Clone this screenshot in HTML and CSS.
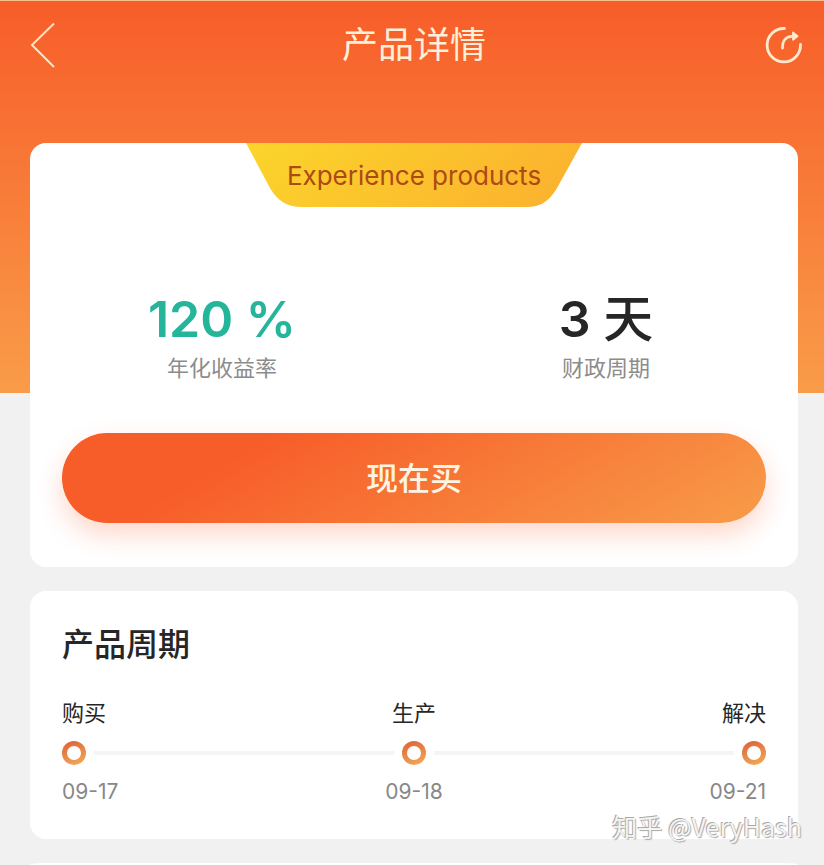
FILE: index.html
```html
<!DOCTYPE html>
<html lang="zh-CN">
<head>
    <meta charset="UTF-8">
    <meta name="viewport" content="width=device-width, initial-scale=1.0">
    <title>产品详情</title>
    <link rel="stylesheet" href="styles.css">
</head>
<body>
    <header class="header">
        <a class="back" href="#" aria-label="返回">
            <svg width="30" height="50" viewBox="0 0 30 50" fill="none" stroke="#ffe3c2" stroke-width="2">
                <path d="M28 3.500L6 25L28 47"/>
            </svg>
        </a>
        <h1>产品详情</h1>
        <button class="share" type="button" aria-label="分享">
            <svg width="40" height="40" viewBox="0 0 40 40" fill="none" stroke="#ffe9cd" stroke-width="2.800" stroke-linecap="round">
                <path d="M22.500 3.500A16.700 16.700 0 1 0 38.500 19.500"/>
                <path d="M20.500 23C20.500 15.500 23 11.800 30 11.300"/>
                <path d="M31 7.500L35.500 11.300L31 14.800Z" fill="#ffe9cd" stroke-width="1.800" stroke-linejoin="round"/>
            </svg>
        </button>
    </header>

    <main>
        <section class="card product">
            <div class="ribbon">
                <svg viewBox="0 0 336 64" width="336" height="64">
                    <defs>
                        <linearGradient id="gold" x1="0" y1="0" x2="1" y2="0.2">
                            <stop offset="0" stop-color="#fbd52b"/>
                            <stop offset="1" stop-color="#fbb42e"/>
                        </linearGradient>
                    </defs>
                    <path fill="url(#gold)" d="M0 0H336L311 45C304 57 296 64 280 64H56C40 64 31 57 24 45Z"/>
                </svg>
                <span>Experience products</span>
            </div>

            <dl class="stats">
                <div>
                    <dd class="rate">120 %</dd>
                    <dt>年化收益率</dt>
                </div>
                <div>
                    <dd>3 <span class="unit">天</span></dd>
                    <dt>财政周期</dt>
                </div>
            </dl>

            <button class="buy" type="button">现在买</button>
        </section>

        <section class="card cycle">
            <h2>产品周期</h2>
            <ol class="timeline">
                <li>
                    <span class="step">购买</span>
                    <i class="dot"></i>
                    <time>09-17</time>
                </li>
                <li>
                    <span class="step">生产</span>
                    <i class="dot"></i>
                    <time>09-18</time>
                </li>
                <li>
                    <span class="step">解决</span>
                    <i class="dot"></i>
                    <time>09-21</time>
                </li>
            </ol>
        </section>

        <section class="card next"></section>
    </main>

    <div class="watermark">知乎 @VeryHash</div>
</body>
</html>
```

FILE: styles.css
```css
* {
    box-sizing: border-box;
    margin: 0;
    padding: 0;
}

html {
    background: #f1f1f1;
}

body {
    position: relative;
    display: flex;
    flex-direction: column;
    min-height: 100vh;
    border-top: 1px solid #f9bd92;
    background: linear-gradient(#f75d29, #f99c49) no-repeat top / 100% 392px;
    font-family: Inter, "Noto Sans CJK SC", sans-serif;
    color: #262626;
}

/* Top bar */
.header {
    display: grid;
    grid-template-columns: 1fr auto 1fr;
    align-items: center;
    height: 88px;
    padding: 0 22px 0 26px;
}

.header h1 {
    font-size: 36px;
    font-weight: 400;
    line-height: 48px;
    color: #ffefd9;
}

.header svg {
    display: block;
}

.share {
    justify-self: end;
    border: none;
    background: none;
    cursor: pointer;
}

/* Cards */
main {
    display: flex;
    flex: 1;
    flex-direction: column;
    gap: 24px;
    padding: 54px 26px 0 30px;
}

.card {
    border-radius: 16px;
    background: #fff;
}

.product {
    padding-bottom: 44px;
}

.ribbon {
    display: grid;
    justify-content: center;
    height: 64px;
}

.ribbon svg,
.ribbon span {
    grid-area: 1 / 1;
}

.ribbon span {
    text-align: center;
    font-size: 26px;
    line-height: 66px;
    color: #ad4a13;
}

/* Rate and period */
.stats {
    display: grid;
    grid-template-columns: 1fr 1fr;
    padding: 80px 0 48px;
    text-align: center;
}

.stats div {
    display: flex;
    flex-direction: column;
}

.stats dd {
    font-size: 50px;
    font-weight: 600;
    line-height: 64px;
}

.stats .rate {
    color: #25b59b;
}

.unit {
    font-weight: 500;
}

.stats dt {
    font-size: 22px;
    font-weight: 400;
    line-height: 34px;
    color: #8c8c8c;
}

.buy {
    display: block;
    width: calc(100% - 64px);
    height: 90px;
    margin: 0 auto;
    padding-bottom: 4px;
    border: none;
    border-radius: 45px;
    background: linear-gradient(150deg, #f75d29 25%, #f89c49);
    box-shadow: 0 12px 26px rgba(247, 93, 41, 0.24);
    font-family: inherit;
    font-size: 32px;
    font-weight: 500;
    color: #fff3e2;
    cursor: pointer;
}

/* Product cycle */
.cycle {
    padding: 30px 32px 32px;
}

.cycle h2 {
    font-size: 32px;
    font-weight: 500;
    line-height: 48px;
}

.timeline {
    display: grid;
    grid-template-columns: 1fr 1fr 1fr;
    margin-top: 28px;
    list-style: none;
    background: linear-gradient(#f5f5f7, #f5f5f7) no-repeat center 54px / calc(100% - 24px) 4px;
}

.timeline li {
    display: flex;
    flex-direction: column;
    align-items: center;
}

.timeline li:first-child {
    align-items: flex-start;
}

.timeline li:last-child {
    align-items: flex-end;
}

.step {
    font-size: 22px;
    line-height: 32px;
}

.dot {
    width: 24px;
    height: 24px;
    margin: 12px 0;
    border: 5px solid transparent;
    border-radius: 50%;
    background:
        linear-gradient(#fff, #fff) padding-box,
        linear-gradient(160deg, #dc6038, #f3ae58) border-box;
    box-shadow: 0 0 0 8px #fff;
}

.timeline time {
    font-size: 21px;
    line-height: 30px;
    color: #888;
}

.next {
    flex: 1;
    border-radius: 16px 16px 0 0 / 2px 2px 0 0;
}

.watermark {
    position: absolute;
    right: 22px;
    bottom: 22px;
    font-family: "Noto Sans CJK SC", sans-serif;
    font-size: 25px;
    line-height: 34px;
    color: #f4f4f4;
    text-shadow: -1px -1px 0 #aaa, 1px 1px 1px #aaa;
}
```
